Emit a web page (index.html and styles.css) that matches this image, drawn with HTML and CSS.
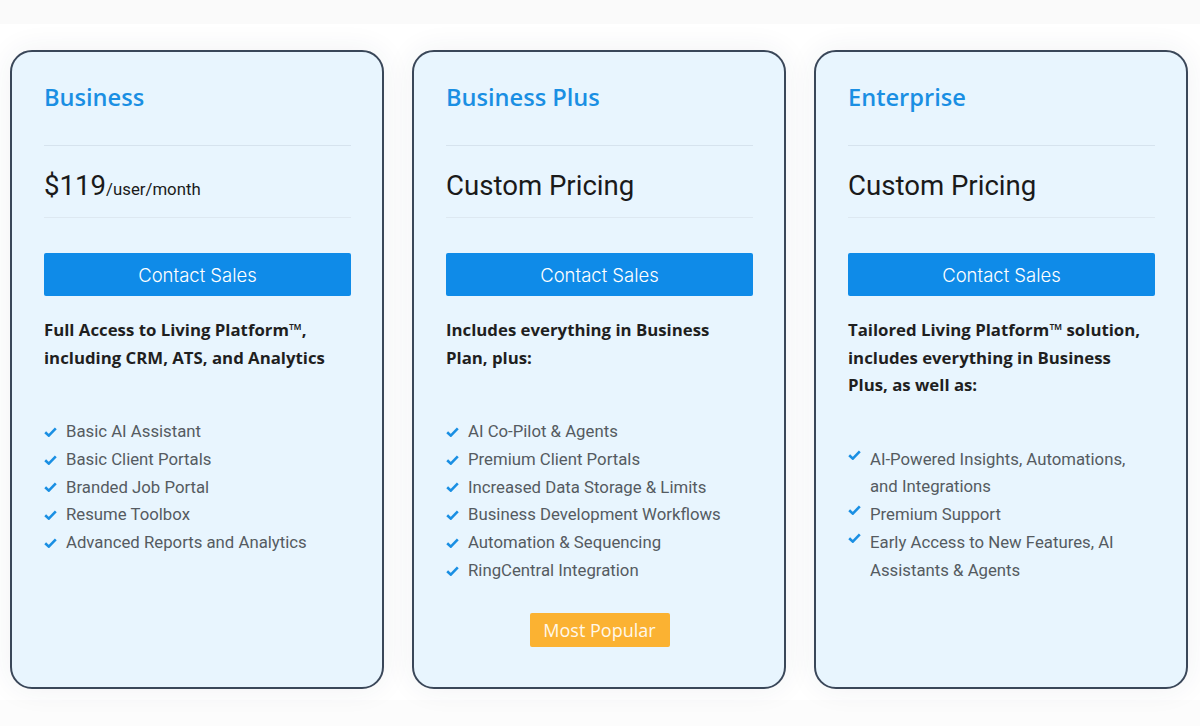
FILE: index.html
```html
<!DOCTYPE html>
<html lang="en">
<head>
    <meta charset="UTF-8">
    <meta name="viewport" content="width=device-width, initial-scale=1.0">
    <title>Pricing Plans</title>
    <link rel="stylesheet" href="styles.css">
</head>
<body>
    <div class="top-band"></div>
    <div class="plans">
        <div class="plan">
            <h2 class="plan-title">Business</h2>
            <div class="plan-price">$119<span class="per">/user/month</span></div>
            <button class="contact">Contact Sales</button>
            <p class="plan-desc">Full Access to Living Platform™, including CRM, ATS, and Analytics</p>
            <ul class="features">
                <li><span class="check"></span>Basic AI Assistant</li>
                <li><span class="check"></span>Basic Client Portals</li>
                <li><span class="check"></span>Branded Job Portal</li>
                <li><span class="check"></span>Resume Toolbox</li>
                <li><span class="check"></span>Advanced Reports and Analytics</li>
            </ul>
        </div>

        <div class="plan">
            <h2 class="plan-title">Business Plus</h2>
            <div class="plan-price">Custom Pricing</div>
            <button class="contact">Contact Sales</button>
            <p class="plan-desc">Includes everything in Business Plan, plus:</p>
            <ul class="features">
                <li><span class="check"></span>AI Co-Pilot &amp; Agents</li>
                <li><span class="check"></span>Premium Client Portals</li>
                <li><span class="check"></span>Increased Data Storage &amp; Limits</li>
                <li><span class="check"></span>Business Development Workflows</li>
                <li><span class="check"></span>Automation &amp; Sequencing</li>
                <li><span class="check"></span>RingCentral Integration</li>
            </ul>
            <div class="badge-row">
                <span class="badge">Most Popular</span>
            </div>
        </div>

        <div class="plan">
            <h2 class="plan-title">Enterprise</h2>
            <div class="plan-price">Custom Pricing</div>
            <button class="contact">Contact Sales</button>
            <p class="plan-desc">Tailored Living Platform™ solution, includes everything in Business Plus, as well as:</p>
            <ul class="features features-top">
                <li><span class="check"></span>AI-Powered Insights, Automations, and Integrations</li>
                <li><span class="check"></span>Premium Support</li>
                <li><span class="check"></span>Early Access to New Features, AI Assistants &amp; Agents</li>
            </ul>
        </div>
    </div>
    <div class="bottom-band"></div>
</body>
</html>
```

FILE: styles.css
```css
body {
    margin: 0;
    background: #fff;
    font-family: 'Open Sans', Arial, sans-serif;
}
.top-band {
    height: 24px;
    background: #fafafa;
}
.bottom-band {
    height: 26px;
    background: #fcfcfc;
}
.plans {
    display: grid;
    grid-template-columns: repeat(3, 374px);
    gap: 28px;
    padding: 26px 0 11px 10px;
}
.plan {
    box-sizing: border-box;
    height: 639px;
    background: #e8f5fe;
    border: 2px solid #3a4759;
    border-radius: 22px;
    padding: 30px 31px 0 32px;
    box-shadow: 0 0 30px rgba(40, 60, 90, 0.07);
    display: flex;
    flex-direction: column;
}
.plan-title {
    margin: 0;
    font-size: 23.6px;
    line-height: 30px;
    font-weight: 600;
    color: #1a8fe3;
    padding-bottom: 33px;
    border-bottom: 1px solid #d6e3ee;
}
.plan-price {
    font-family: Roboto, Arial, sans-serif;
    font-size: 27.6px;
    line-height: 36px;
    color: #1a1a1a;
    padding: 22px 0 13px;
    border-bottom: 1px solid #dde8f1;
}
.per {
    font-size: 16.8px;
    line-height: 1;
}
.contact {
    margin-top: 35px;
    height: 43px;
    border: none;
    border-radius: 2px;
    background: #0f8be8;
    color: #fff;
    font-family: Inter, Arial, sans-serif;
    font-size: 18.5px;
    font-weight: 300;
    cursor: pointer;
}
.plan-desc {
    margin: 20px 0 0;
    font-size: 16.8px;
    line-height: 27.5px;
    font-weight: 700;
    color: #1f1f1f;
}
.features {
    list-style: none;
    margin: 47px 0 0;
    padding: 0;
    font-family: Roboto, Arial, sans-serif;
    font-size: 16.75px;
    line-height: 27.75px;
    color: #555b61;
}
.features li {
    display: flex;
    align-items: center;
}
.check {
    flex: none;
    width: 13px;
    height: 10px;
    margin-right: 9px;
    background: no-repeat center / contain url("data:image/svg+xml;utf8,<svg xmlns='http://www.w3.org/2000/svg' viewBox='0 0 13 10'><path d='M1.2 5.2 L4.8 8.6 L11.8 1.4' fill='none' stroke='%231a8fe3' stroke-width='2.6'/></svg>");
}
.features-top li {
    align-items: flex-start;
}
.features-top .check {
    margin-top: 4px;
}
.badge-row {
    display: flex;
    justify-content: center;
    margin-top: 28px;
}
.badge {
    width: 140px;
    height: 34px;
    line-height: 34px;
    text-align: center;
    background: #fbb232;
    color: #fff8ea;
    border-radius: 2px;
    font-size: 18px;
}
```
